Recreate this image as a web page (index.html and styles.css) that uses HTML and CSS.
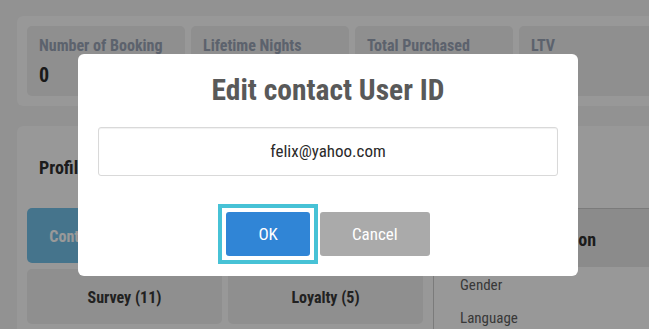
FILE: index.html
```html
<!DOCTYPE html>
<html lang="en">
<head>
<meta charset="utf-8">
<title>Edit contact User ID</title>
<link rel="stylesheet" href="styles.css">
</head>
<body>
<div class="page">
  <section class="stats">
    <div class="stat"><div class="stat-label">Number of Booking</div><div class="stat-value">0</div></div>
    <div class="stat"><div class="stat-label">Lifetime Nights</div><div class="stat-value">0</div></div>
    <div class="stat"><div class="stat-label">Total Purchased</div><div class="stat-value">0</div></div>
    <div class="stat"><div class="stat-label">LTV</div><div class="stat-value">0</div></div>
  </section>
  <section class="profile">
    <div class="profile-left">
      <h2 class="profile-title">Profile</h2>
      <div class="tabs">
        <button class="tab tab-active">Contact Information (3)</button>
        <button class="tab">Booking (0)</button>
        <button class="tab">Survey (11)</button>
        <button class="tab">Loyalty (5)</button>
      </div>
    </div>
    <div class="profile-right">
      <div class="info-head">Profile Information</div>
      <div class="info-row">Gender</div>
      <div class="info-row">Language</div>
    </div>
  </section>
</div>

<div class="overlay">
  <div class="modal" role="dialog">
    <h2 class="modal-title">Edit contact User ID</h2>
    <input class="modal-input" type="text" value="felix@yahoo.com">
    <div class="modal-actions">
      <button class="btn btn-ok">OK</button>
      <button class="btn btn-cancel">Cancel</button>
    </div>
  </div>
</div>
</body>
</html>
```
FILE: styles.css
```css
html, body {
  margin: 0;
  padding: 0;
  overflow: hidden;
  width: 649px;
  height: 329px;
}

body {
  background: #f3f3f3;
  font-family: "Roboto Condensed", "Liberation Sans Narrow", Roboto, sans-serif;
  font-stretch: condensed;
  color: #333;
}

.page {
  width: 720px;
  padding: 16px 0 0 17px;
}

/* stats */
.stats {
  display: flex;
  gap: 6px;
  padding: 10px;
  background: #fdfdfd;
  border-radius: 6px;
  height: 70px;
}

.stat {
  flex: 0 0 158px;
  box-sizing: border-box;
  height: 70px;
  background: #eeeeee;
  border-radius: 5px;
  padding: 10px 12px;
}

.stat-label {
  font-size: 16px;
  line-height: 20px;
  font-weight: 700;
  color: #9aa4b6;
  white-space: nowrap;
}

.stat-value {
  margin-top: 7px;
  font-size: 20px;
  line-height: 24px;
  font-weight: 700;
  color: #2b2b2b;
}

/* profile */
.profile {
  margin-top: 20px;
  display: flex;
  gap: 10px;
  background: #fdfdfd;
  border-radius: 6px;
  padding: 31px 0 40px 10px;
}

.profile-left {
  flex: 0 0 396px;
}

.profile-title {
  margin: 0 0 29px 12px;
  font-size: 18px;
  line-height: 22px;
  font-weight: 700;
  color: #303030;
}

.tabs {
  display: grid;
  grid-template-columns: 195px 195px;
  grid-auto-rows: 55px;
  gap: 6px;
}

.tab {
  border: 0;
  border-radius: 5px;
  background: #eeeeee;
  font: inherit;
  font-size: 16px;
  font-weight: 700;
  color: #383838;
  padding: 1px 0 0 0;
}

.tab-active {
  background: #74c2ea;
  color: #ffffff;
}

.profile-right {
  flex: 1;
  margin-top: 51px;
  border-left: 1px solid #cdcdcd;
  border-top: 1px solid #cdcdcd;
}

.info-head {
  height: 58px;
  box-sizing: border-box;
  margin-bottom: 2px;
  background: #e8e8e8;
  padding: 2px 0 0 26px;
  font-size: 18px;
  font-weight: 700;
  line-height: 58px;
  color: #303030;
}

.info-row {
  padding-left: 26px;
  font-size: 15px;
  line-height: 33px;
  color: #5f5f5f;
}

/* modal */
.overlay {
  position: fixed;
  inset: 0;
  background: rgba(0, 0, 0, 0.4);
  display: flex;
  align-items: center;
  justify-content: center;
  padding-left: 7px;
}

.modal {
  width: 500px;
  box-sizing: border-box;
  background: #ffffff;
  border-radius: 6px;
  padding: 18px 20px 20px 20px;
  display: flex;
  flex-direction: column;
  align-items: center;
}

.modal-title {
  margin: 0;
  font-size: 29.5px;
  line-height: 36px;
  font-weight: 700;
  color: #595959;
  text-align: center;
}

.modal-input {
  margin: 19px 0 0 0;
  width: 100%;
  height: 49px;
  box-sizing: border-box;
  border: 1px solid #d9d9d9;
  border-radius: 3px;
  box-shadow: inset 0 1px 1px rgba(0, 0, 0, 0.06);
  font: inherit;
  font-size: 17px;
  color: #2a2a2a;
  text-align: center;
  padding: 0 12px;
  outline: none;
}

.modal-actions {
  margin-top: 36px;
  display: flex;
  gap: 10px;
  justify-content: center;
}

.btn {
  height: 44px;
  border: 0;
  border-radius: 3px;
  padding: 0 32px;
  font: inherit;
  font-size: 17px;
  color: #ffffff;
}

.btn-ok {
  position: relative;
  background: #3085d6;
}

.btn-ok::after {
  content: "";
  position: absolute;
  inset: -8px;
  border: 4px solid #47c2d6;
  pointer-events: none;
}

.btn-cancel {
  background: #aaaaaa;
}
```
